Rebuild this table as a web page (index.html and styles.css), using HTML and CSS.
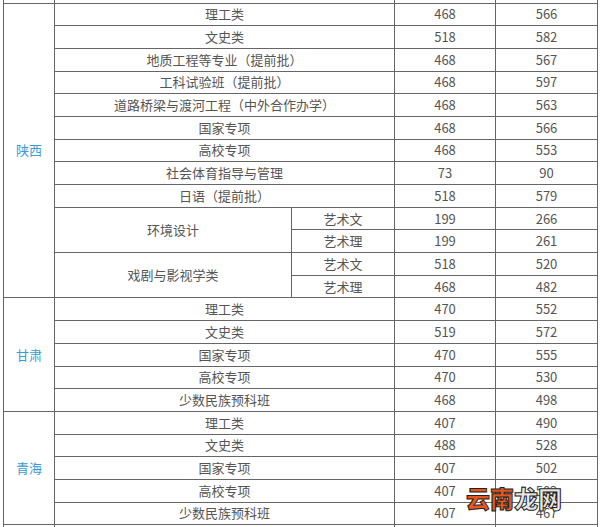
FILE: index.html
```html
<!DOCTYPE html>
<html lang="zh">
<head>
<meta charset="utf-8">
<link rel="stylesheet" href="styles.css">
</head>
<body>
<div class="frame">
<table class="score">
<colgroup>
<col class="c-prov"><col class="c-cat"><col class="c-sub"><col class="c-s1"><col class="c-s2">
</colgroup>
<tbody>
<tr class="cut"><td></td><td colspan="2"></td><td></td><td></td></tr>
<tr><td class="prov" rowspan="13">陕西</td><td colspan="2">理工类</td><td>468</td><td>566</td></tr>
<tr><td colspan="2">文史类</td><td>518</td><td>582</td></tr>
<tr><td colspan="2">地质工程等专业（提前批）</td><td>468</td><td>567</td></tr>
<tr><td colspan="2">工科试验班（提前批）</td><td>468</td><td>597</td></tr>
<tr><td colspan="2">道路桥梁与渡河工程（中外合作办学）</td><td>468</td><td>563</td></tr>
<tr><td colspan="2">国家专项</td><td>468</td><td>566</td></tr>
<tr><td colspan="2">高校专项</td><td>468</td><td>553</td></tr>
<tr><td colspan="2">社会体育指导与管理</td><td>73</td><td>90</td></tr>
<tr><td colspan="2">日语（提前批）</td><td>518</td><td>579</td></tr>
<tr><td rowspan="2">环境设计</td><td>艺术文</td><td>199</td><td>266</td></tr>
<tr><td>艺术理</td><td>199</td><td>261</td></tr>
<tr><td rowspan="2">戏剧与影视学类</td><td>艺术文</td><td>518</td><td>520</td></tr>
<tr><td>艺术理</td><td>468</td><td>482</td></tr>
<tr><td class="prov" rowspan="5">甘肃</td><td colspan="2">理工类</td><td>470</td><td>552</td></tr>
<tr><td colspan="2">文史类</td><td>519</td><td>572</td></tr>
<tr><td colspan="2">国家专项</td><td>470</td><td>555</td></tr>
<tr><td colspan="2">高校专项</td><td>470</td><td>530</td></tr>
<tr><td colspan="2">少数民族预科班</td><td>468</td><td>498</td></tr>
<tr><td class="prov" rowspan="5">青海</td><td colspan="2">理工类</td><td>407</td><td>490</td></tr>
<tr><td colspan="2">文史类</td><td>488</td><td>528</td></tr>
<tr><td colspan="2">国家专项</td><td>407</td><td>502</td></tr>
<tr><td colspan="2">高校专项</td><td>407</td><td>502</td></tr>
<tr><td colspan="2">少数民族预科班</td><td>407</td><td>467</td></tr>
<tr class="cut"><td></td><td colspan="2"></td><td></td><td></td></tr>
</tbody>
</table>
<div class="mark"><span class="m1">云南</span><span class="m2">龙网</span></div>
</div>
</body>
</html>
```
FILE: styles.css
```css
html, body {
  margin: 0;
  padding: 0;
  background: #fff;
}
.frame {
  position: relative;
  width: 600px;
  height: 527px;
  overflow: hidden;
  padding-left: 3px;
  box-sizing: border-box;
}
.score {
  border-collapse: collapse;
  table-layout: fixed;
  width: 594px;
  margin-top: -20.2px;
  font-family: "Noto Sans CJK SC", "Noto Sans", sans-serif;
  font-size: 13px;
  color: #555;
}
.c-prov { width: 51px; }
.c-cat { width: 237px; }
.c-sub { width: 103px; }
.c-s1 { width: 101px; }
.c-s2 { width: 102px; }
.score td {
  border: 1px solid #666;
  height: 21.7px;
  padding: 0;
  line-height: 16px;
  text-align: center;
  vertical-align: middle;
  white-space: nowrap;
}
.score td.prov {
  color: #3a9bd5;
}
.mark {
  position: absolute;
  left: 466px;
  top: 484px;
  font-family: "Noto Sans CJK SC", sans-serif;
  font-weight: 900;
  font-size: 24px;
  line-height: 28px;
  letter-spacing: 0;
  -webkit-text-stroke: 1px #222;
}
.m1 { color: #e8561e; }
.m2 { color: #e6e6e6; }
```
